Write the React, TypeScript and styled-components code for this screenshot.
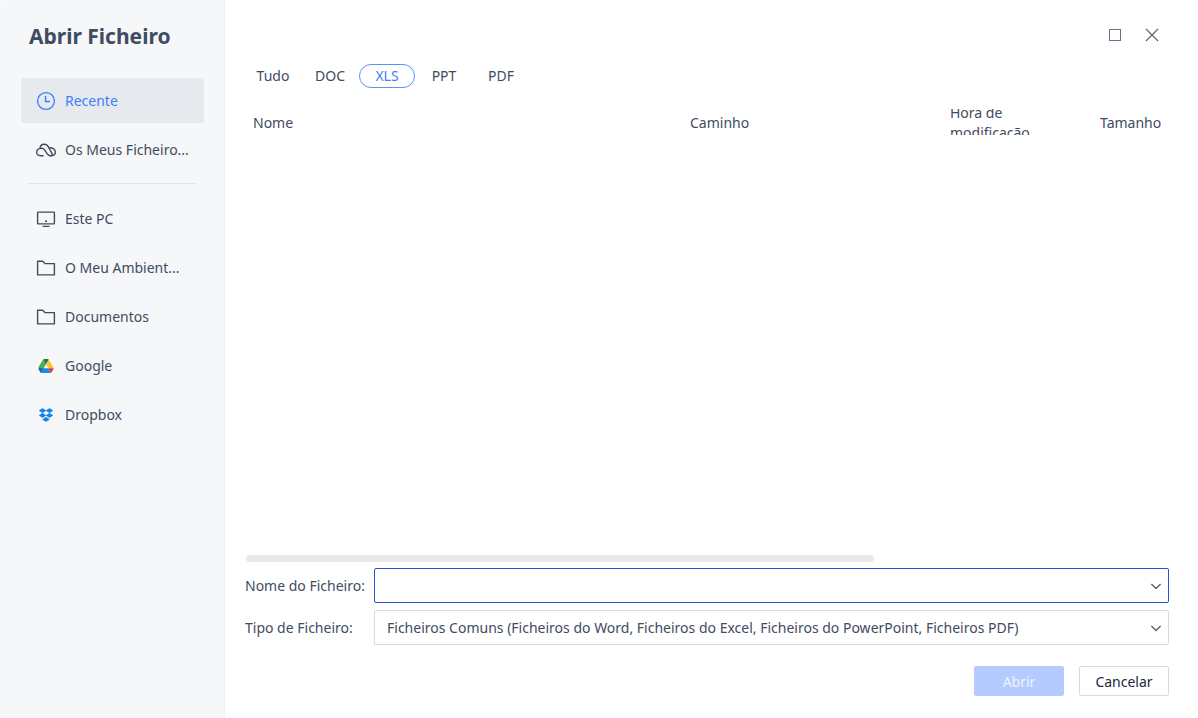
import React, { useState } from "react";
import styled, { createGlobalStyle } from "styled-components";

const GlobalStyle = createGlobalStyle`
  *, *::before, *::after { box-sizing: border-box; }
  body { margin: 0; background: #ffffff; }
  body, button, input, select {
    font-family: "Segoe UI", "Noto Sans", "Open Sans", sans-serif;
    font-size: 14px;
    line-height: 20px;
    color: #414b61;
  }
`;

const Dialog = styled.div`
  display: flex;
  min-height: 100vh;
`;

const Sidebar = styled.aside`
  flex: 0 0 225px;
  padding: 20px;
  background: #f5f7f9;
  border-right: 1px solid #eff1f3;
  border-top-left-radius: 2px;
`;

const Title = styled.h1`
  margin: 0 0 26px;
  padding-left: 9px;
  font-size: 21px;
  line-height: 32px;
  font-weight: 700;
`;

const NavList = styled.nav`
  display: flex;
  flex-direction: column;
  gap: 4px;
  padding-left: 1px;
`;

const NavItem = styled.button<{ $active?: boolean }>`
  display: flex;
  align-items: center;
  gap: 9px;
  height: 45px;
  padding: 0 15px;
  border: 0;
  border-radius: 2px;
  background: ${(p) => (p.$active ? "#e6e9ee" : "transparent")};
  color: ${(p) => (p.$active ? "#417ff9" : "#414b61")};
  text-align: left;
  white-space: nowrap;
  cursor: pointer;

  svg { flex: none; }
`;

const Divider = styled.hr`
  width: 168px;
  margin: 7px 0 8px 7px;
  border: 0;
  border-top: 1px solid #e4e6ea;
`;

const Main = styled.main`
  flex: 1;
  min-width: 0;
  display: flex;
  flex-direction: column;
  padding: 22px 29px 22px 20px;
`;

const WindowControls = styled.div`
  display: flex;
  justify-content: flex-end;
  gap: 11px;
  padding-right: 4px;
`;

const IconButton = styled.button`
  display: grid;
  place-items: center;
  width: 26px;
  height: 26px;
  padding: 0;
  border: 0;
  background: transparent;
  cursor: pointer;
`;

const Filters = styled.div`
  display: flex;
  gap: 1px;
  margin-top: 16px;
`;

const FilterTab = styled.button<{ $active: boolean }>`
  width: 56px;
  height: 24px;
  padding: 0;
  border: 1px solid ${(p) => (p.$active ? "#5b8ff9" : "transparent")};
  border-radius: 12px;
  background: transparent;
  color: ${(p) => (p.$active ? "#417ff9" : "#414b61")};
  cursor: pointer;
`;

const ListArea = styled.section`
  flex: 1;
  margin-top: 21px;
`;

const FileTable = styled.table`
  width: 100%;
  table-layout: fixed;
  border-collapse: collapse;
`;

const HeadCell = styled.th<{ $width?: number }>`
  width: ${(p) => (p.$width ? `${p.$width}px` : "auto")};
  padding: 0 0 0 8px;
  font-weight: 400;
  text-align: left;
`;

const HeadLabel = styled.div`
  display: flex;
  align-items: center;
  max-width: 100px;
  height: 26px;
  padding-top: 2px;
  overflow: hidden;
`;

const ScrollTrack = styled.div`
  padding-left: 1px;
`;

const ScrollThumb = styled.div`
  width: 68%;
  height: 7px;
  border-radius: 4px;
  background: #e8e9eb;
`;

const Form = styled.form`
  display: flex;
  flex-direction: column;
  gap: 7px;
  margin-top: 6px;
`;

const Field = styled.div`
  display: flex;
  align-items: center;
`;

const FieldLabel = styled.label`
  flex: 0 0 129px;
  white-space: nowrap;
`;

const Control = styled.div<{ $focused?: boolean }>`
  position: relative;
  flex: 1;
  min-width: 0;
  height: 35px;
  border: 1px solid ${(p) => (p.$focused ? "#2353d0" : "#dadbdd")};
  border-radius: 2px;

  input, select {
    display: block;
    width: 100%;
    height: 100%;
    padding: 0 32px 0 12px;
    border: 0;
    outline: 0;
    appearance: none;
    background: transparent;
  }

  svg {
    position: absolute;
    right: 6px;
    top: 11px;
    pointer-events: none;
  }
`;

const Actions = styled.div`
  display: flex;
  justify-content: flex-end;
  gap: 15px;
  margin-top: 14px;
`;

const ActionButton = styled.button<{ $primary?: boolean }>`
  width: 90px;
  height: 30px;
  padding: 2px 0 0;
  border: 1px solid ${(p) => (p.$primary ? "#b3cbff" : "#d7d9df")};
  border-radius: 2px;
  background: ${(p) => (p.$primary ? "#b3cbff" : "#ffffff")};
  color: ${(p) => (p.$primary ? "#f0f5ff" : "#20283a")};
`;

const strokeIcon = {
  width: 20,
  height: 20,
  viewBox: "0 0 20 20",
  fill: "none",
  stroke: "currentColor",
  strokeWidth: 1.4,
  "aria-hidden": true,
};

const ClockIcon = () => (
  <svg {...strokeIcon}>
    <circle cx="10" cy="10" r="8.4" />
    <path d="M9.5 5v5.5H14" />
  </svg>
);

const CloudIcon = () => (
  <svg {...strokeIcon}>
    <path d="M7.600 15.700H4.200C2.200 15.700.7 14.300.7 12.300c0-2 1.400-3.500 3.200-3.700C4.100 6 5.800 4.200 8.200 4.200c1.900 0 3.300 1 4.200 2.700l3.400 6.300c.8 1.500.4 2.500-1 2.500-1.900 0-3-.6-3.800-2L8.600 9.900C7.600 8.300 5.900 7.900 3.900 8.600" />
    <path d="M12.900 8c3.400-.9 6.400 1 6.400 4 0 2.200-1.600 3.700-3.800 3.700h-1.800" />
  </svg>
);

const MonitorIcon = () => (
  <svg {...strokeIcon}>
    <rect x="1.600" y="3.100" width="16.800" height="11.800" rx=".6" />
    <path d="M9 12.300h2M6.500 17.400h7" />
  </svg>
);

const FolderIcon = () => (
  <svg {...strokeIcon}>
    <path d="M1.600 3.200h5.200l2.200 2.400h9.400v11.300H1.600z" strokeLinejoin="round" />
  </svg>
);

const DriveIcon = () => (
  <svg width="20" height="20" viewBox="0 0 20 20" aria-hidden="true">
    <path d="M7.200 3.500 10 8.200l-4.600 7.900H4.800L2.700 12.700q-.5-1 0-2z" fill="#4caf50" />
    <path d="M7.200 3.500q.5-.5 1.200-.5h3.200q.8 0 1.200.5L10 8.200z" fill="#1b7c37" />
    <path d="M12.800 3.500l4.500 7.700q.3.600.2 1.100h-5.100L10 8.200z" fill="#fdc32b" />
    <path d="M7.600 12.300h4.800l2.600 4.400q-.4.200-.9.200H5.900q-.6 0-.9-.2z" fill="#1e88e5" />
    <path d="M2.500 12.300h5.100L5 16.700q-.5-.2-.8-.7l-1.500-2.600q-.2-.5-.2-1.100z" fill="#1560c4" />
    <path d="M12.400 12.300h5.100q0 .6-.2 1.100L15.800 16q-.3.500-.8.700z" fill="#e63a30" />
  </svg>
);

const DropboxIcon = () => (
  <svg
    width="20"
    height="20"
    viewBox="0 0 20 20"
    fill="#0d82e9"
    stroke="#0d82e9"
    strokeWidth=".6"
    strokeLinejoin="round"
    aria-hidden="true"
  >
    <path d="M6.500 3.400 9.800 5.600 6.500 7.800 3.200 5.600zM13.500 3.400l3.300 2.200-3.300 2.200-3.300-2.200zM6.500 8.200l3.300 2.200-3.300 2.200-3.300-2.200zM13.500 8.200l3.300 2.200-3.300 2.200-3.300-2.200zM10 12.200l3.300 2.200L10 16.600l-3.300-2.200z" />
  </svg>
);

const ChevronIcon = () => (
  <svg width="12" height="12" viewBox="0 0 12 12" fill="none" stroke="#566078" strokeWidth="1.400" aria-hidden="true">
    <path d="M1.400 4 6 8.600 10.600 4" />
  </svg>
);

const filters = ["Tudo", "DOC", "XLS", "PPT", "PDF"];

const recentPlaces = [
  { label: "Recente", Icon: ClockIcon },
  { label: "Os Meus Ficheiro...", Icon: CloudIcon },
];

const places = [
  { label: "Este PC", Icon: MonitorIcon },
  { label: "O Meu Ambient...", Icon: FolderIcon },
  { label: "Documentos", Icon: FolderIcon },
  { label: "Google", Icon: DriveIcon },
  { label: "Dropbox", Icon: DropboxIcon },
];

const columns = [
  { label: "Nome" },
  { label: "Caminho", width: 260 },
  { label: "Hora de modificação", width: 150 },
  { label: "Tamanho", width: 77 },
];

export default function App() {
  const [place, setPlace] = useState("Recente");
  const [filter, setFilter] = useState("XLS");

  const renderPlace = ({ label, Icon }: { label: string; Icon: React.FC }) => (
    <NavItem key={label} type="button" $active={place === label} onClick={() => setPlace(label)}>
      <Icon />
      {label}
    </NavItem>
  );

  return (
    <>
      <GlobalStyle />
      <Dialog>
        <Sidebar>
          <Title>Abrir Ficheiro</Title>
          <NavList>
            {recentPlaces.map(renderPlace)}
            <Divider />
            {places.map(renderPlace)}
          </NavList>
        </Sidebar>
        <Main>
          <WindowControls>
            <IconButton type="button" aria-label="Maximizar">
              <svg width="14" height="14" viewBox="0 0 14 14" fill="none" stroke="#66718c" aria-hidden="true">
                <rect x="1.500" y="1.500" width="11" height="11" />
              </svg>
            </IconButton>
            <IconButton type="button" aria-label="Fechar">
              <svg width="14" height="14" viewBox="0 0 14 14" stroke="#666666" strokeWidth="1.200" aria-hidden="true">
                <path d="M1 1l12 12M13 1 1 13" />
              </svg>
            </IconButton>
          </WindowControls>
          <Filters>
            {filters.map((name) => (
              <FilterTab key={name} type="button" $active={filter === name} onClick={() => setFilter(name)}>
                {name}
              </FilterTab>
            ))}
          </Filters>
          <ListArea>
            <FileTable>
              <thead>
                <tr>
                  {columns.map(({ label, width }) => (
                    <HeadCell key={label} $width={width} scope="col">
                      <HeadLabel>{label}</HeadLabel>
                    </HeadCell>
                  ))}
                </tr>
              </thead>
            </FileTable>
          </ListArea>
          <ScrollTrack>
            <ScrollThumb />
          </ScrollTrack>
          <Form onSubmit={(e) => e.preventDefault()}>
            <Field>
              <FieldLabel htmlFor="file-name">Nome do Ficheiro:</FieldLabel>
              <Control $focused>
                <input id="file-name" type="text" />
                <ChevronIcon />
              </Control>
            </Field>
            <Field>
              <FieldLabel htmlFor="file-type">Tipo de Ficheiro:</FieldLabel>
              <Control>
                <select id="file-type">
                  <option>Ficheiros Comuns (Ficheiros do Word, Ficheiros do Excel, Ficheiros do PowerPoint, Ficheiros PDF)</option>
                </select>
                <ChevronIcon />
              </Control>
            </Field>
            <Actions>
              <ActionButton type="submit" $primary disabled>Abrir</ActionButton>
              <ActionButton type="button">Cancelar</ActionButton>
            </Actions>
          </Form>
        </Main>
      </Dialog>
    </>
  );
}
